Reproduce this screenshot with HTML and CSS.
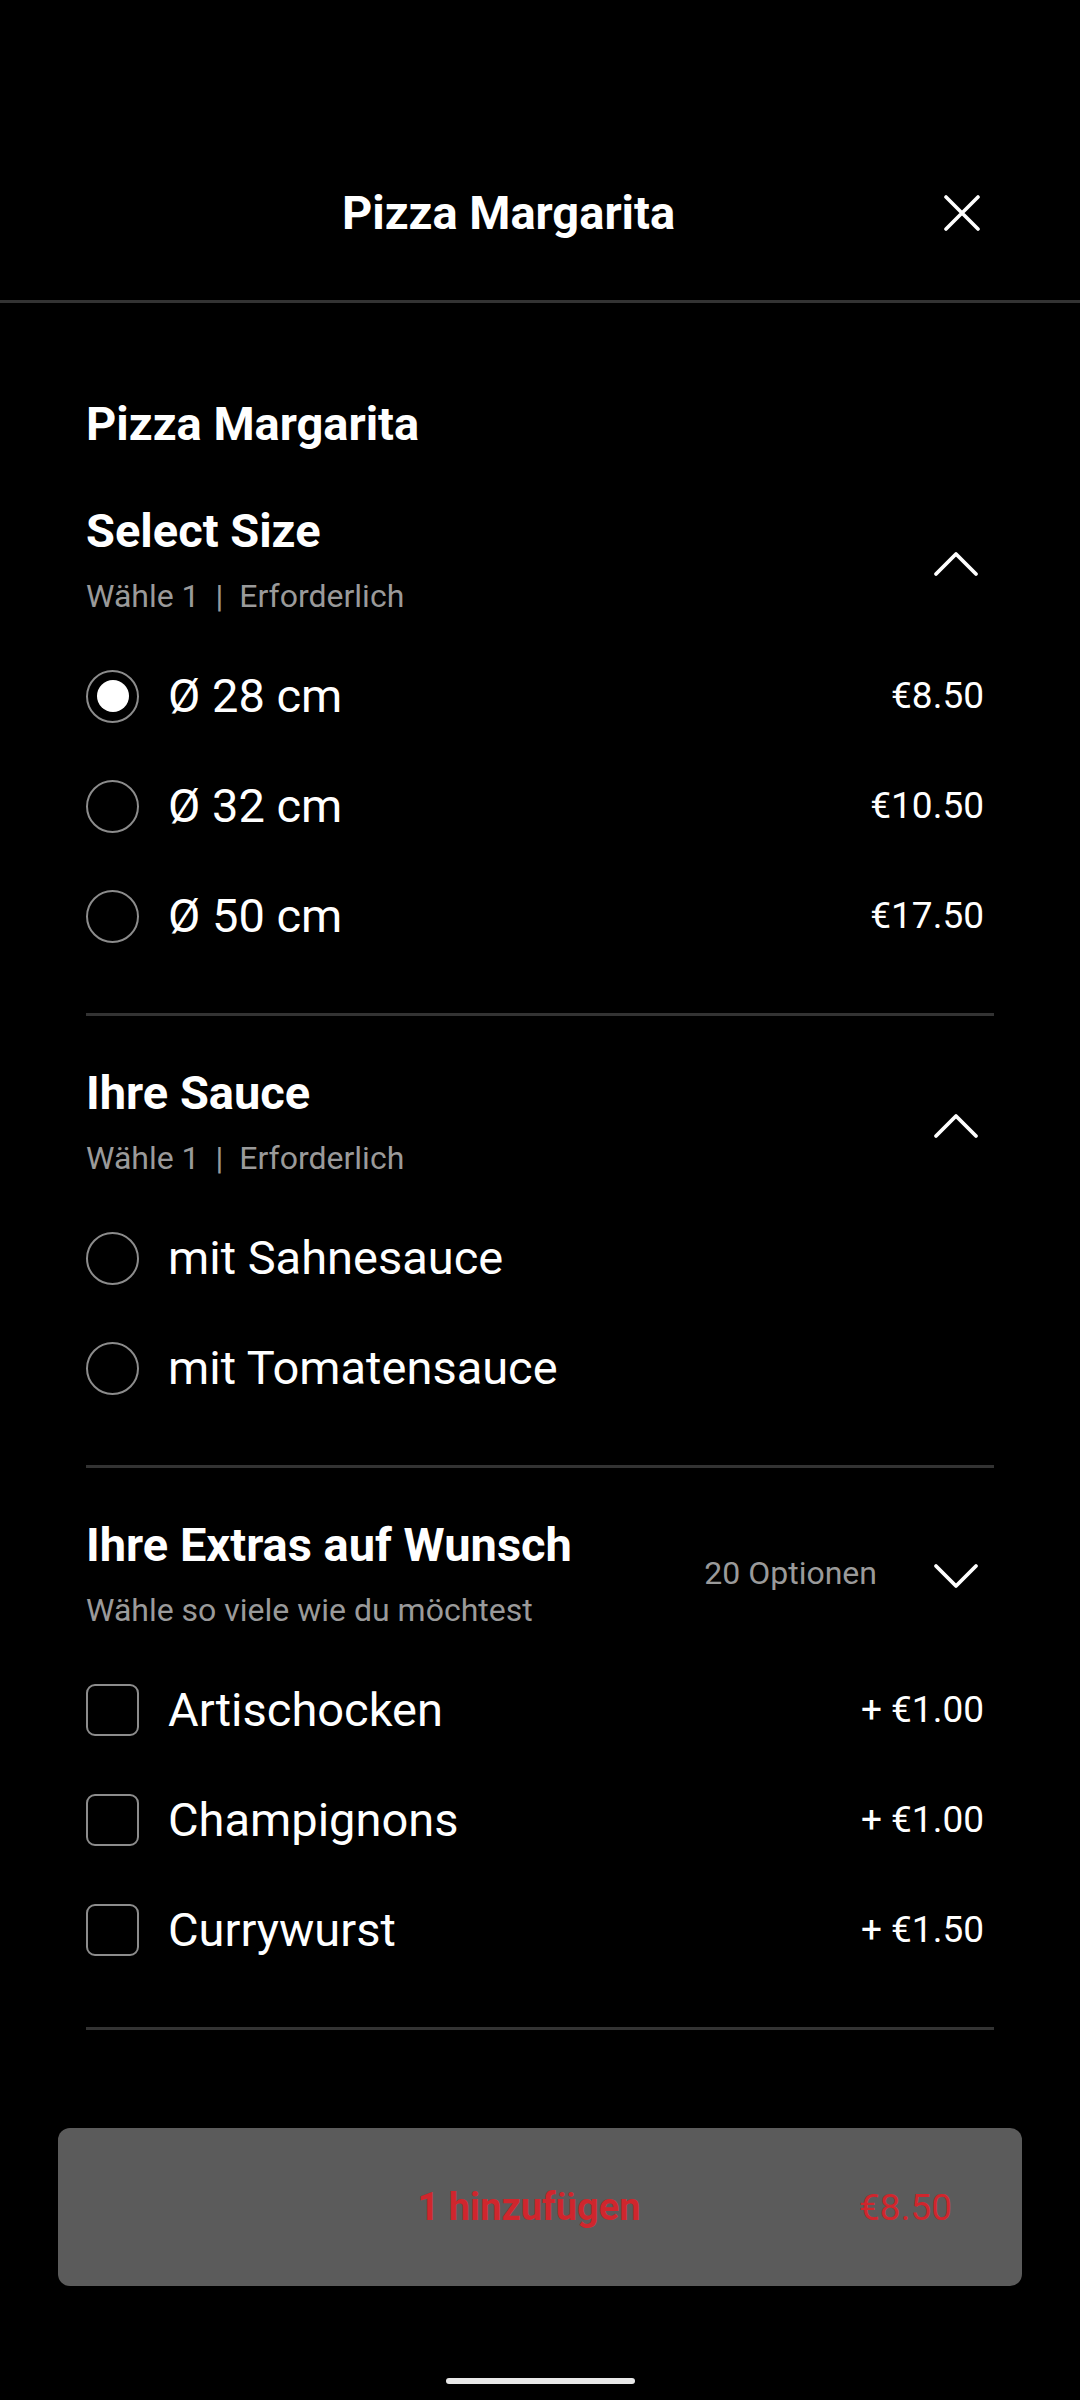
FILE: index.html
```html
<!DOCTYPE html>
<html lang="de">
<head>
<meta charset="utf-8">
<title>Pizza Margarita</title>
<link rel="stylesheet" href="styles.css">
</head>
<body>
<div class="screen">
  <header class="topbar">
    <h1 class="topbar-title">Pizza Margarita</h1>
    <button class="close" aria-label="Schließen">
      <svg viewBox="0 0 36 36" width="36" height="36"><path d="M2 2 L34 34 M34 2 L2 34" stroke="#fff" stroke-width="3.6" stroke-linecap="round" fill="none"/></svg>
    </button>
  </header>

  <main class="content">
    <h2 class="product-title">Pizza Margarita</h2>

    <section class="group">
      <div class="group-head">
        <div class="group-text">
          <h3 class="group-title">Select Size</h3>
          <p class="group-sub">Wähle 1 <span class="sep">|</span> Erforderlich</p>
        </div>
        <span class="chev"><svg viewBox="0 0 48 48" width="48" height="48"><path d="M4 34 L24 14 L44 34" stroke="#fff" stroke-width="3.8" stroke-linecap="round" stroke-linejoin="round" fill="none"/></svg></span>
      </div>
      <ul class="options">
        <li class="option"><span class="radio checked"></span><span class="label">Ø 28 cm</span><span class="price">€8.50</span></li>
        <li class="option"><span class="radio"></span><span class="label">Ø 32 cm</span><span class="price">€10.50</span></li>
        <li class="option"><span class="radio"></span><span class="label">Ø 50 cm</span><span class="price">€17.50</span></li>
      </ul>
    </section>

    <section class="group">
      <div class="group-head">
        <div class="group-text">
          <h3 class="group-title">Ihre Sauce</h3>
          <p class="group-sub">Wähle 1 <span class="sep">|</span> Erforderlich</p>
        </div>
        <span class="chev"><svg viewBox="0 0 48 48" width="48" height="48"><path d="M4 34 L24 14 L44 34" stroke="#fff" stroke-width="3.8" stroke-linecap="round" stroke-linejoin="round" fill="none"/></svg></span>
      </div>
      <ul class="options">
        <li class="option"><span class="radio"></span><span class="label">mit Sahnesauce</span></li>
        <li class="option"><span class="radio"></span><span class="label">mit Tomatensauce</span></li>
      </ul>
    </section>

    <section class="group">
      <div class="group-head">
        <div class="group-text">
          <h3 class="group-title">Ihre Extras auf Wunsch</h3>
          <p class="group-sub">Wähle so viele wie du möchtest</p>
        </div>
        <span class="count">20 Optionen</span>
        <span class="chev chev-down"><svg viewBox="0 0 48 48" width="48" height="48"><path d="M4 14 L24 34 L44 14" stroke="#fff" stroke-width="3.8" stroke-linecap="round" stroke-linejoin="round" fill="none"/></svg></span>
      </div>
      <ul class="options">
        <li class="option"><span class="check"></span><span class="label">Artischocken</span><span class="price">+ €1.00</span></li>
        <li class="option"><span class="check"></span><span class="label">Champignons</span><span class="price">+ €1.00</span></li>
        <li class="option"><span class="check"></span><span class="label">Currywurst</span><span class="price">+ €1.50</span></li>
      </ul>
    </section>
  </main>

  <footer class="footer">
    <button class="add-btn"><span class="add-label">1 hinzufügen</span><span class="add-price">€8.50</span></button>
    <div class="home-indicator"></div>
  </footer>
</div>
</body>
</html>
```

FILE: styles.css
```css
* { box-sizing: border-box; }
html, body {
  margin: 0;
  padding: 0;
  background: #000;
  color: #fff;
  font-family: Roboto, "Noto Sans", "Liberation Sans", sans-serif;
}
.screen {
  width: 1080px;
  height: 2400px;
  display: flex;
  flex-direction: column;
  overflow: hidden;
}
.topbar {
  height: 303px;
  padding: 125px 87px 0;
  display: flex;
  align-items: center;
  border-bottom: 3px solid #333;
}
.topbar-title {
  flex: 1;
  margin: 0;
  text-align: center;
  font-size: 47px;
  font-weight: 700;
  line-height: 56px;
}
.close {
  width: 63px;
  height: 63px;
  padding: 0;
  border: 0;
  background: none;
  display: flex;
  align-items: center;
  justify-content: center;
}
.content {
  padding: 93px 86px 0 86px;
}
.product-title {
  margin: 0 0 2px;
  font-size: 47px;
  font-weight: 700;
  line-height: 56px;
}
.group {
  padding: 49px 0 42px;
  border-bottom: 3px solid #333;
}
.group-head {
  display: flex;
  align-items: center;
}
.group-text {
  flex: 1;
}
.group-title {
  margin: 0;
  font-size: 47px;
  font-weight: 700;
  line-height: 56px;
}
.group-sub {
  margin: 17px 0 0;
  font-size: 32px;
  line-height: 40px;
  color: #9a9a9a;
}
.sep {
  margin: 0 8px;
}
.count {
  font-size: 32px;
  line-height: 40px;
  color: #9a9a9a;
  margin-top: -2px;
  margin-right: 55px;
}
.chev {
  width: 48px;
  height: 48px;
  margin-right: 14px;
  margin-top: 8px;
  display: flex;
}
.chev-down {
  margin-top: 4px;
}
.options {
  list-style: none;
  margin: 25px 0 0;
  padding: 0;
}
.option {
  height: 110px;
  display: flex;
  align-items: center;
  gap: 29px;
  padding-right: 10px;
}
.radio {
  width: 53px;
  height: 53px;
  border: 2px solid #8c8c8c;
  border-radius: 50%;
  flex: none;
  display: flex;
  align-items: center;
  justify-content: center;
}
.radio.checked::after {
  content: "";
  width: 32px;
  height: 32px;
  border-radius: 50%;
  background: #fff;
}
.check {
  width: 53px;
  height: 52px;
  border: 2px solid #8c8c8c;
  border-radius: 9px;
  flex: none;
}
.label {
  flex: 1;
  font-size: 47px;
  line-height: 56px;
}
.price {
  font-size: 37px;
  line-height: 44px;
}
.footer {
  padding: 98px 58px 0;
  display: flex;
  flex-direction: column;
  align-items: center;
}
.add-btn {
  width: 964px;
  height: 158px;
  border: 0;
  border-radius: 12px;
  background: #5b5b5b;
  display: flex;
  align-items: center;
  padding: 0 70px 0 141px;
  font-family: Roboto, "Noto Sans", "Liberation Sans", sans-serif;
  color: #d0262d;
}
.add-label {
  flex: 1;
  text-align: center;
  font-size: 38px;
  font-weight: 700;
}
.add-price {
  font-size: 37px;
}
.home-indicator {
  margin-top: 92px;
  width: 189px;
  height: 6px;
  border-radius: 3px;
  background: #e8e8e8;
}
```
